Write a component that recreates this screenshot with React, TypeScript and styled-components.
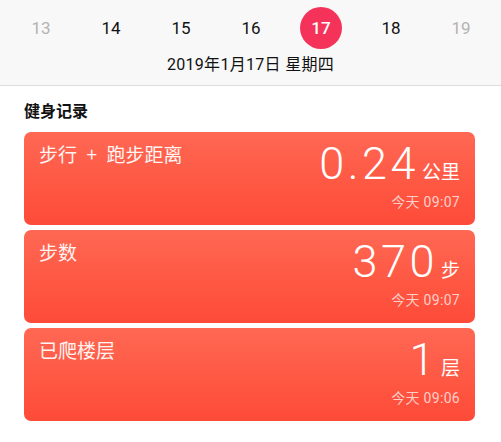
import React from "react";
import styled, { createGlobalStyle } from "styled-components";

const Global = createGlobalStyle`
  html, body { margin: 0; padding: 0; background: #ffffff; }
  body {
    font-family: "Roboto", "Noto Sans CJK SC", sans-serif;
    -webkit-font-smoothing: antialiased;
  }
`;

const Page = styled.div`
  width: 501px;
  height: 442px;
  overflow: hidden;
  background: #ffffff;
`;

const Header = styled.header`
  height: 86px;
  box-sizing: border-box;
  background: #f8f8f8;
  border-bottom: 1px solid #dcdcdc;
  display: flex;
  flex-direction: column;
  padding-top: 7px;
`;

const DayRow = styled.div`
  display: grid;
  grid-template-columns: repeat(7, 70px);
  padding: 0 5px 0 6px;
  height: 42px;
`;

const Day = styled.div<{ $muted?: boolean; $active?: boolean }>`
  display: flex;
  align-items: center;
  justify-content: center;
  font-family: "Roboto", sans-serif;
  font-size: 17px;
  font-weight: ${(p) => (p.$active ? 500 : 400)};
  color: ${(p) => (p.$active ? "#ffffff" : p.$muted ? "#b3b3b3" : "#111111")};
`;

const Circle = styled.span`
  width: 42px;
  height: 42px;
  border-radius: 50%;
  background: #f5335a;
  display: flex;
  align-items: center;
  justify-content: center;
`;

const DateLine = styled.div`
  margin-top: 5px;
  text-align: center;
  font-family: "Roboto", "Noto Sans CJK SC", sans-serif;
  font-size: 16px;
  line-height: 21px;
  letter-spacing: 0.3px;
  color: #111111;
`;

const Section = styled.section`
  padding: 13px 26px 0 24px;
`;

const SectionTitle = styled.h2`
  margin: 0 0 11px;
  font-family: "Noto Sans CJK SC", sans-serif;
  font-size: 16px;
  line-height: 22px;
  font-weight: 700;
  color: #111111;
`;

const Cards = styled.div`
  display: flex;
  flex-direction: column;
  gap: 5px;
`;

const Card = styled.div`
  height: 93px;
  box-sizing: border-box;
  border-radius: 7px;
  background: linear-gradient(180deg, #ff6854 0%, #fe5843 55%, #fe4b39 100%);
  display: grid;
  grid-template-columns: 1fr auto;
  padding: 0 15px;
  color: #ffffff;
`;

const Title = styled.div`
  padding-top: 10px;
  font-family: "Noto Sans CJK SC", sans-serif;
  font-size: 19px;
  line-height: 24px;
  color: #fff4f2;
  white-space: pre;
`;

const Right = styled.div`
  display: flex;
  flex-direction: column;
  align-items: flex-end;
`;

const Value = styled.div`
  margin-top: 9px;
  display: flex;
  align-items: baseline;
  line-height: 46px;
  height: 46px;
`;

const Number = styled.span`
  font-family: "Roboto", sans-serif;
  font-weight: 300;
  font-size: 45px;
  letter-spacing: 3.5px;
`;

const Unit = styled.span`
  margin-left: 3px;
  font-family: "Noto Sans CJK SC", sans-serif;
  font-size: 19px;
  font-weight: 400;
`;

const Time = styled.div`
  margin-top: 7px;
  font-family: "Roboto", "Noto Sans CJK SC", sans-serif;
  font-size: 14px;
  line-height: 17px;
  letter-spacing: 0.3px;
  color: rgba(255, 255, 255, 0.72);
`;

const days = [
  { n: 13, muted: true },
  { n: 14 },
  { n: 15 },
  { n: 16 },
  { n: 17, active: true },
  { n: 18 },
  { n: 19, muted: true },
];

const records = [
  { title: "步行\u2002+\u2002跑步距离", value: "0.24", unit: "公里", time: "今天 09:07" },
  { title: "步数", value: "370", unit: "步", time: "今天 09:07" },
  { title: "已爬楼层", value: "1", unit: "层", time: "今天 09:06" },
];

export default function App() {
  return (
    <Page>
      <Global />
      <Header>
        <DayRow>
          {days.map((d) => (
            <Day key={d.n} $muted={d.muted} $active={d.active}>
              {d.active ? <Circle>{d.n}</Circle> : d.n}
            </Day>
          ))}
        </DayRow>
        <DateLine>2019年1月17日 星期四</DateLine>
      </Header>
      <Section>
        <SectionTitle>健身记录</SectionTitle>
        <Cards>
          {records.map((r) => (
            <Card key={r.title}>
              <Title>{r.title}</Title>
              <Right>
                <Value>
                  <Number>{r.value}</Number>
                  <Unit>{r.unit}</Unit>
                </Value>
                <Time>{r.time}</Time>
              </Right>
            </Card>
          ))}
        </Cards>
      </Section>
    </Page>
  );
}
